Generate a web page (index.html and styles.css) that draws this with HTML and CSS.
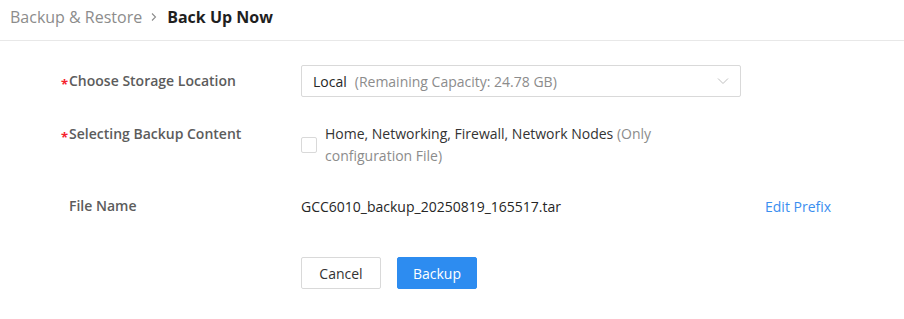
FILE: index.html
```html
<!DOCTYPE html>
<html lang="en">
<head>
    <meta charset="UTF-8">
    <meta name="viewport" content="width=device-width, initial-scale=1.0">
    <title>Back Up Now</title>
    <link rel="stylesheet" href="styles.css">
</head>
<body>
    <div class="breadcrumb">
        <span class="crumb">Backup &amp; Restore</span>
        <svg class="sep" width="8" height="10" viewBox="0 0 8 10"><path d="M2 1.5 L5.5 5 L2 8.5" fill="none" stroke="#8c8c8c" stroke-width="1.1"/></svg>
        <span class="current">Back Up Now</span>
    </div>

    <div class="form">
        <div class="row">
            <div class="label"><span class="req">*</span>Choose Storage Location</div>
            <div class="select">
                <span class="value">Local</span>
                <span class="hint">(Remaining Capacity: 24.78 GB)</span>
                <svg class="arrow" width="12" height="8" viewBox="0 0 12 8"><path d="M1 1.5 L6 6.5 L11 1.5" fill="none" stroke="#bfbfbf" stroke-width="1"/></svg>
            </div>
        </div>

        <div class="row row-top">
            <div class="label label-tight"><span class="req">*</span>Selecting Backup Content</div>
            <label class="check">
                <span class="box"></span>
                <span class="check-text">Home, Networking, Firewall, Network Nodes <span class="muted">(Only configuration File)</span></span>
            </label>
        </div>

        <div class="row">
            <div class="label"><span class="req"></span>File Name</div>
            <div class="file-name">GCC6010_backup_20250819_165517.tar</div>
            <a class="link" href="#">Edit Prefix</a>
        </div>

        <div class="actions">
            <button class="btn">Cancel</button>
            <button class="btn btn-primary">Backup</button>
        </div>
    </div>
</body>
</html>
```

FILE: styles.css
```css
body {
    margin: 0;
    font-family: "Open Sans", "Noto Sans", Arial, sans-serif;
    font-size: 14px;
    color: #333;
    background: #fff;
}
.breadcrumb {
    display: flex;
    align-items: center;
    height: 41px;
    box-sizing: border-box;
    padding: 5px 10px 12px;
    border-bottom: 1px solid #e8e8e8;
    font-size: 16px;
    line-height: 24px;
}
.crumb {
    color: #8c8c8c;
}
.sep {
    margin: 0 9px 0 8px;
}
.current {
    font-weight: 700;
    color: #1f1f1f;
}
.form {
    padding: 24px 0 0 61px;
}
.row {
    display: flex;
    align-items: center;
    min-height: 32px;
    margin-bottom: 24px;
}
.row-top {
    align-items: flex-start;
    padding-top: 2px;
    margin-bottom: 23px;
}
.label {
    width: 240px;
    flex-shrink: 0;
    font-weight: 600;
    color: #5c5c5c;
    line-height: 32px;
}
.label-tight {
    line-height: 22px;
}
.req {
    display: inline-block;
    width: 8px;
    font-size: 13px;
    line-height: 0;
    color: #f5222d;
    font-weight: 700;
    vertical-align: -3px;
}
.select {
    display: flex;
    align-items: center;
    width: 440px;
    height: 32px;
    box-sizing: border-box;
    padding: 0 11px;
    border: 1px solid #d9d9d9;
    border-radius: 2px;
}
.select .value {
    color: #262626;
}
.select .hint {
    margin-left: 8px;
    color: #8c8c8c;
}
.select .arrow {
    margin-left: auto;
}
.check {
    display: flex;
    align-items: center;
    width: 440px;
    line-height: 22px;
    cursor: pointer;
}
.box {
    width: 16px;
    height: 16px;
    flex-shrink: 0;
    box-sizing: border-box;
    border: 1px solid #d9d9d9;
    border-radius: 2px;
    margin-right: 8px;
}
.muted {
    color: #8c8c8c;
}
.file-name {
    width: 440px;
    color: #262626;
}
.link {
    margin-left: 24px;
    color: #3a8ef0;
    text-decoration: none;
}
.actions {
    display: flex;
    gap: 16px;
    margin-left: 240px;
    padding-top: 11px;
}
.btn {
    width: 80px;
    height: 32px;
    font-family: inherit;
    font-size: 14px;
    color: #333;
    background: #fff;
    border: 1px solid #d9d9d9;
    border-radius: 2px;
    cursor: pointer;
}
.btn-primary {
    color: #fff;
    background: #2d8cf0;
    border-color: #2d8cf0;
}
```
